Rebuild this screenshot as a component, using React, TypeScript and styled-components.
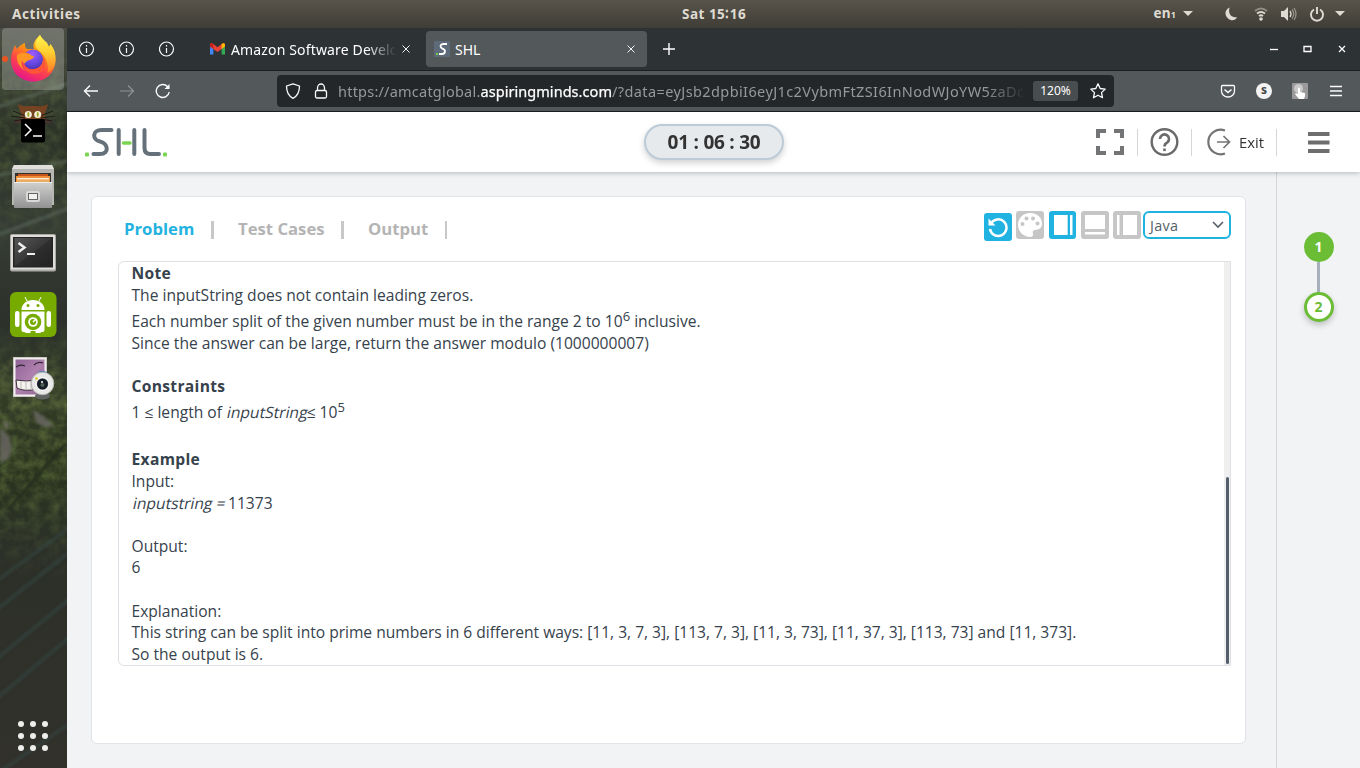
import React from "react";
import styled, { createGlobalStyle } from "styled-components";

const GlobalStyle = createGlobalStyle`
  * { box-sizing: border-box; }
  body { margin: 0; overflow: hidden; font-family: "Open Sans", "Noto Sans", sans-serif; }
  svg { display: block; flex: none; }
`;

const Desktop = styled.div`
  width: 1360px;
  height: 768px;
  display: flex;
  flex-direction: column;
`;

/* ---------- system bar ---------- */
const SystemBar = styled.header`
  height: 28px;
  flex: none;
  display: grid;
  grid-template-columns: 670px auto 1fr;
  align-items: center;
  padding: 0 15px 0 12px;
  background: linear-gradient(#58544a, #3f3d37);
  color: #dfdbd2;
  font: 700 13.5px/27px "Noto Sans", sans-serif;
`;
const SystemLabel = styled.span<{ $spacing?: number }>`
  letter-spacing: ${(p) => p.$spacing ?? 0}px;
  white-space: nowrap;
`;
const Indicators = styled.div`
  display: flex;
  align-items: center;
  justify-content: flex-end;
`;
const Indicator = styled.span<{ $gap: number }>`
  display: flex;
  margin-left: ${(p) => p.$gap}px;
`;
const SmallDigit = styled.span`
  font-size: 9px;
`;

const Workspace = styled.div`
  flex: 1;
  display: flex;
  min-height: 0;
`;

/* ---------- dock ---------- */
const Dock = styled.nav`
  width: 67px;
  flex: none;
  position: relative;
  overflow: hidden;
  background: #33342e;
`;
const Wallpaper = styled.div`
  position: absolute;
  inset: 0;
`;
const DockItems = styled.div`
  position: relative;
  height: 100%;
  display: flex;
  flex-direction: column;
  align-items: center;
  padding: 0 1px 17px 0;
`;
const DockItem = styled.div<{ $active?: boolean }>`
  width: 62px;
  height: 62px;
  margin-bottom: 2px;
  border-radius: 4px;
  display: flex;
  align-items: center;
  justify-content: center;
  background: ${(p) => (p.$active ? "rgba(255,255,255,0.22)" : "none")};
`;
const RunningDot = styled.span`
  position: absolute;
  left: 2px;
  top: 28px;
  width: 6px;
  height: 6px;
  border-radius: 50%;
  background: #e95420;
`;
const AppGrid = styled.div`
  margin-top: auto;
  display: grid;
  grid-template-columns: repeat(3, 6px);
  gap: 6px;
`;
const AppDot = styled.i`
  width: 6px;
  height: 6px;
  border-radius: 50%;
  background: #eeeeec;
`;

/* ---------- browser ---------- */
const Browser = styled.main`
  flex: 1;
  min-width: 0;
  display: flex;
  flex-direction: column;
  font-family: "Noto Sans", sans-serif;
`;
const TabBar = styled.div`
  height: 43px;
  flex: none;
  display: flex;
  align-items: center;
  padding: 0 14px 1px 0;
  background: #2d3235;
  border-bottom: 1px solid #1c1f21;
  color: #fff;
`;
const PinnedTab = styled.div`
  width: 40px;
  flex: none;
  display: flex;
  justify-content: center;
`;
const Tab = styled.div<{ $active?: boolean }>`
  width: 221px;
  flex: none;
  height: 36px;
  margin-left: ${(p) => (p.$active ? 4 : 14)}px;
  padding: 0 12px 0 ${(p) => (p.$active ? 8 : 9)}px;
  display: flex;
  align-items: center;
  gap: ${(p) => (p.$active ? 5 : 6)}px;
  border-radius: 4px;
  background: ${(p) => (p.$active ? "#53585a" : "transparent")};
`;
const TabTitle = styled.span<{ $fade?: boolean; $spacing: number }>`
  flex: 1;
  min-width: 0;
  overflow: hidden;
  white-space: nowrap;
  padding-top: 2px;
  font-size: 14px;
  line-height: 20px;
  letter-spacing: ${(p) => p.$spacing}px;
  ${(p) => (p.$fade ? "mask-image: linear-gradient(90deg, #000 82%, transparent);" : "")}
`;
const NewTab = styled.div`
  margin: 1px 0 0 16px;
`;
const WindowControls = styled.div`
  margin-left: auto;
  display: flex;
  gap: 24px;
`;
const NavBar = styled.div`
  height: 41px;
  flex: none;
  display: flex;
  align-items: center;
  padding: 0 16px 1px 16px;
  background: #53585a;
  border-bottom: 1px solid #1c1f21;
`;
const NavButtons = styled.div`
  display: flex;
  gap: 20px;
  width: 194px;
`;
const UrlBar = styled.div`
  width: 837px;
  height: 32px;
  display: flex;
  align-items: center;
  padding: 0 8px;
  border-radius: 4px;
  background: #232729;
`;
const UrlIcons = styled.div`
  display: flex;
  gap: 12px;
`;
const Url = styled.span`
  width: 688px;
  margin-left: 9px;
  white-space: nowrap;
  color: #96999a;
  font-size: 14.5px;
  line-height: 22px;
  letter-spacing: 0.22px;
  mask-image: linear-gradient(90deg, #000 94%, transparent);
`;
const Domain = styled.span`
  color: #fff;
  letter-spacing: 0.05px;
  -webkit-text-stroke: 0.25px #fff;
`;
const UrlQuery = styled.span`
  letter-spacing: 0.4px;
`;
const ZoomBadge = styled.span`
  width: 45px;
  margin: 0 12px 0 7px;
  height: 20px;
  border-radius: 3px;
  background: #484d4f;
  color: #fff;
  font-size: 12px;
  line-height: 20px;
  text-align: center;
`;
const Extensions = styled.div`
  margin-left: auto;
  display: flex;
  align-items: center;
  gap: 20px;
`;
const ProfileBadge = styled.span`
  width: 16px;
  height: 16px;
  border-radius: 50%;
  background: #f3f3f3;
  color: #444;
  font: 700 12px/14px "Noto Sans", sans-serif;
  text-align: center;
`;

/* ---------- page ---------- */
const Page = styled.div`
  flex: 1;
  min-height: 0;
  display: flex;
  flex-direction: column;
  background: #f1f3f5;
  font-family: "Open Sans", sans-serif;
`;
const PageHeader = styled.header`
  height: 60px;
  flex: none;
  position: relative;
  display: flex;
  align-items: center;
  padding: 0 30px 0 18px;
  background: #fff;
  box-shadow: 0 1px 5px rgba(0, 0, 0, 0.25);
`;
const Timer = styled.div`
  width: 140px;
  height: 36px;
  margin-left: 477px;
  border: 2px solid #bccbd7;
  border-radius: 18px;
  background: #e7eaed;
  box-shadow: 0 3px 6px rgba(0, 0, 0, 0.18);
  color: #333;
  font-size: 19px;
  font-weight: 700;
  line-height: 32px;
  letter-spacing: -0.25px;
  text-align: center;
  white-space: nowrap;
`;
const HeaderTools = styled.div`
  margin-left: auto;
  display: flex;
  align-items: center;
`;
const HeaderCell = styled.div<{ $width: number; $divided?: boolean; $justify?: string }>`
  width: ${(p) => p.$width}px;
  height: 27px;
  display: flex;
  align-items: center;
  justify-content: ${(p) => p.$justify ?? "center"};
  border-right: ${(p) => (p.$divided ? "1px solid #d5d6d9" : "none")};
  color: #333;
  font-size: 14.8px;
`;
const ExitGroup = styled.div`
  display: flex;
  align-items: center;
  gap: 8px;
  padding-right: 12px;
`;
const PageBody = styled.div`
  flex: 1;
  min-height: 0;
  display: flex;
`;
const ContentArea = styled.section`
  width: 1210px;
  padding: 24px 30px 24px 24px;
  border-right: 1px solid #d5d7db;
`;
const Card = styled.article`
  height: 548px;
  padding: 14px 14px 0 26px;
  border: 1px solid #e1e3e8;
  border-radius: 6px;
  background: #fff;
`;
const CardTop = styled.div`
  height: 50px;
  display: flex;
  align-items: flex-start;
`;
const SectionTab = styled.div<{ $active?: boolean; $width: number; $bar: number }>`
  width: ${(p) => p.$width}px;
  height: 18px;
  margin: 10px 18px 0 6px;
  border-right: ${(p) => p.$bar}px solid #c8c8c8;
  color: ${(p) => (p.$active ? "#24b2e0" : "#b4b4b4")};
  font-size: 16.7px;
  font-weight: 700;
  line-height: 15px;
  white-space: nowrap;
`;
const Toolbar = styled.div`
  margin-left: auto;
  display: flex;
  gap: 4px;
`;
const ToolButton = styled.button<{ $on?: boolean; $drop?: number; $width?: number; $shift?: boolean }>`
  width: ${(p) => p.$width ?? 28}px;
  height: 28px;
  margin: ${(p) => p.$drop ?? 0}px 0 0 ${(p) => (p.$shift ? 1 : 0)}px;
  padding: 0;
  border: 0;
  border-radius: 3px;
  display: flex;
  align-items: center;
  justify-content: center;
  background: ${(p) => (p.$on ? "#20b2e0" : "#c6c6c6")};
`;
const LanguageSelect = styled.div`
  width: 88px;
  height: 28px;
  margin-left: -2px;
  padding: 0 5px;
  display: flex;
  align-items: center;
  justify-content: space-between;
  border: 2px solid #20b2e0;
  border-radius: 6px;
  background: #fff;
  color: #555f69;
  font-size: 14.4px;
  letter-spacing: 0.3px;
`;
const Statement = styled.div`
  height: 405px;
  display: flex;
  justify-content: space-between;
  border: 1px solid #dfe0e5;
  border-radius: 6px 0 0 6px;
  overflow: hidden;
`;
const StatementText = styled.div`
  padding-left: 12.5px;
  color: #36424c;
  font-size: 15.6px;
`;
const Line = styled.p<{ $height?: number; $spacing?: number }>`
  margin: 0;
  height: ${(p) => p.$height ?? 22}px;
  display: flex;
  align-items: flex-end;
  line-height: 22px;
  letter-spacing: ${(p) => p.$spacing ?? 0}px;
  white-space: pre;
`;
const Heading = styled(Line)`
  font-weight: 700;
  letter-spacing: 0.32px;
`;
const Slanted = styled.span`
  transform: skewX(-12deg);
  transform-origin: 0 78%;
`;
const Sup = styled.span`
  font-size: 13px;
  line-height: 20px;
  align-self: flex-start;
`;
const ScrollTrack = styled.div`
  width: 6px;
  display: flex;
  flex-direction: column;
  align-items: center;
  justify-content: flex-end;
  padding: 0 0 1px 1px;
  background: #efefef;
`;
const ScrollThumb = styled.div`
  width: 3px;
  height: 187px;
  border-radius: 2px;
  background: #545f6b;
`;
const QuestionRail = styled.aside`
  flex: 1;
  display: flex;
  flex-direction: column;
  align-items: center;
  padding-top: 60px;
`;
const QuestionDot = styled.div<{ $current?: boolean }>`
  width: 30px;
  height: 30px;
  border: 3px solid #6bbd35;
  border-radius: 50%;
  background: ${(p) => (p.$current ? "#fff" : "#6bbd35")};
  color: ${(p) => (p.$current ? "#6bbd35" : "#fff")};
  box-shadow: ${(p) => (p.$current ? "0 3px 6px rgba(0,0,0,0.22)" : "none")};
  font-size: 14px;
  font-weight: 700;
  line-height: 24px;
  text-align: center;
`;
const Connector = styled.div`
  width: 3px;
  height: 30px;
  background: #a8b1bb;
`;

/* ---------- drawings ---------- */
const WallpaperArt = () => (
  <svg width="67" height="740" viewBox="0 28 67 740">
    <defs>
      <linearGradient id="wp" x1="0" y1="0" x2="0" y2="1">
        <stop offset="0" stopColor="#4a4d42" />
        <stop offset=".14" stopColor="#2b3227" />
        <stop offset=".27" stopColor="#363c34" />
        <stop offset=".4" stopColor="#2c312b" />
        <stop offset=".5" stopColor="#333b27" />
        <stop offset=".6" stopColor="#29331e" />
        <stop offset=".7" stopColor="#2c3028" />
        <stop offset="1" stopColor="#32312c" />
      </linearGradient>
      <filter id="leaf" x="0" y="0" width="1" height="1">
        <feTurbulence type="fractalNoise" baseFrequency=".1" numOctaves="4" seed="8" />
        <feColorMatrix values="0 0 0 0 .22  0 0 0 0 .32  0 0 0 0 .08  1.6 0 0 0 -.5" />
      </filter>
      <filter id="soft"><feGaussianBlur stdDeviation="1.5" /></filter>
      <linearGradient id="fade" x1="0" y1="0" x2="0" y2="1">
        <stop offset="0" stopColor="#fff" stopOpacity="0" />
        <stop offset=".25" stopColor="#fff" />
        <stop offset=".6" stopColor="#fff" />
        <stop offset="1" stopColor="#fff" stopOpacity="0" />
      </linearGradient>
      <mask id="leafArea">
        <rect y="28" width="67" height="240" fill="url(#fade)" opacity=".3" />
        <rect y="320" width="67" height="260" fill="url(#fade)" opacity=".5" />
      </mask>
    </defs>
    <rect y="28" width="67" height="740" fill="url(#wp)" />
    <rect y="28" width="67" height="740" filter="url(#leaf)" mask="url(#leafArea)" />
    <g filter="url(#soft)" fill="none" strokeWidth="3">
      <path d="M-5 108L72 82M-5 176L72 160M-5 236L72 207" stroke="#66756a" opacity=".5" />
      <path d="M-5 582L72 526M-5 611L72 550M-5 660L72 597M-5 700L72 635M-5 775L72 722" stroke="#354743" opacity=".7" />
      <path d="M8 510L66 443" stroke="#222b1c" />
      <path d="M0 428l9 8 3 14-4 9-8 4ZM2 421l8 3-3 6ZM33 410l9 5 12 11-10 1-8-5Z" fill="#6b6867" opacity=".8" />
    </g>
  </svg>
);

const FirefoxIcon = () => (
  <svg width="48" height="48" viewBox="0 0 48 48">
    <defs>
      <linearGradient id="ffa" x1=".8" y1=".05" x2=".35" y2="1">
        <stop offset="0" stopColor="#ffd83a" />
        <stop offset=".35" stopColor="#ff980e" />
        <stop offset=".65" stopColor="#ff4748" />
        <stop offset="1" stopColor="#e5158b" />
      </linearGradient>
      <linearGradient id="ffy" x1="0" y1="0" x2="0" y2="1">
        <stop offset="0" stopColor="#fff44f" />
        <stop offset=".45" stopColor="#ffd030" />
        <stop offset="1" stopColor="#ff7a28" />
      </linearGradient>
      <radialGradient id="ffb" cx=".45" cy=".25" r=".8">
        <stop offset="0" stopColor="#a25cff" />
        <stop offset=".6" stopColor="#6547e0" />
        <stop offset="1" stopColor="#4530a8" />
      </radialGradient>
    </defs>
    <path d="M31 0c1 3 4 5 7 8l2 4c1-1 1-2 1-3 4 4 5.500 9 5.500 16 0 12-9 21.500-22 21.500S2 37 2 25C2 18 5 13 6 10l2 4c2-3 5-5 8-6 0 3 0 5 2 6h7c-2-6 2-10 6-14Z" fill="url(#ffa)" />
    <path d="M31 0c1 3 4 5 7 8l2 4c1-1 1-2 1-3 4 4 5.500 9 5.500 15 0 6-3 12-8 14 2-9-2-17-8-22-7-5-4-11 .5-16Z" fill="url(#ffy)" />
    <circle cx="24" cy="24.500" r="10" fill="url(#ffb)" />
    <path d="M8 20c4-3 11-3 14 0 0 1 2 1 3 1 0 4-6 3-9 7-1 2-2-1-3-3-1 5 0 8 4 11-6-3-10-9-9-16Z" fill="#ff9624" />
    <path d="M14 27c2 6 6 8 11 7 7-1 10-7 9-13 5 8 1 18-9 18-6 0-11-5-11-12Z" fill="#ff5539" />
  </svg>
);

const KittyIcon = () => (
  <svg width="48" height="48" viewBox="0 0 48 48">
    <path d="M9 5q5 3 11 2h8q6 1 11-2-1 5-3 9v8H12v-8q-2-4-3-9Z" fill="#754321" />
    <path d="M5 23q6-6 12-1l3 2H6q-2 0-1-1Zm38 0q-6-6-12-1l-3 2h14q2 0 1-1Z" fill="#493230" />
    <path d="M4 12l13 5M2 17l14 2M5 22l11-2M44 12l-13 5M46 17l-14 2M43 22l-11-2" stroke="#1d1b17" />
    <circle cx="19.300" cy="15.500" r="3.500" fill="#f1efd8" /><circle cx="28.700" cy="15.500" r="3.500" fill="#f1efd8" />
    <ellipse cx="19.300" cy="15.500" rx="1" ry="2.400" fill="#a3a224" /><ellipse cx="28.700" cy="15.500" rx="1" ry="2.400" fill="#a3a224" />
    <rect x="12" y="20" width="24" height="23.500" rx="2" fill="#000" />
    <path d="M16 25l6 6-6 6M24 37h9" fill="none" stroke="#fff" strokeWidth="1.500" />
  </svg>
);

const FilesIcon = () => (
  <svg width="48" height="48" viewBox="0 1 48 48">
    <defs><linearGradient id="cab" x1="0" y1="0" x2="0" y2="1"><stop offset="0" stopColor="#d1d1d0" /><stop offset="1" stopColor="#929292" /></linearGradient></defs>
    <path d="M5 3h38l2 4v36H3V7Z" fill="#b6b6b3" />
    <path d="M5 3h38l2 4H3Z" fill="#e0dfdc" />
    <path d="M6 11h36v11H6Z" fill="#34302a" />
    <path d="M9 12h30v10H9Z" fill="#c6541d" /><path d="M7 14h34v8H7Z" fill="#f08f35" /><path d="M8 16h32v1.500H8Z" fill="#f8eedf" /><path d="M8 18h32v3H8Z" fill="#e8ad61" />
    <rect x="5" y="20" width="38" height="26" rx="1" fill="url(#cab)" />
    <path d="M5 20.500h38" stroke="#ecece9" />
    <rect x="18" y="30" width="12" height="9" rx="1.500" fill="none" stroke="#d9d9d7" strokeWidth="2" />
    <rect x="19.500" y="31.500" width="9" height="6" fill="#f1f1ef" stroke="#666" />
  </svg>
);

const TerminalIcon = () => (
  <svg width="48" height="48" viewBox="0 -1.500 48 48">
    <defs><linearGradient id="term" x1="0" y1="0" x2="1" y2="1"><stop offset="0" stopColor="#555" /><stop offset=".5" stopColor="#393939" /><stop offset=".52" stopColor="#2e2e2e" /><stop offset="1" stopColor="#222" /></linearGradient></defs>
    <rect x="1" y="5.500" width="46" height="37.500" rx="2" fill="#aaa9a6" />
    <rect x="2" y="6.500" width="44" height="34.500" rx="1" fill="#deddda" />
    <rect x="4" y="8.500" width="40" height="30.500" fill="#252525" />
    <rect x="5.500" y="9.500" width="37" height="28" fill="url(#term)" />
    <path d="M9.500 14.500l6 4.500-6 4.500" fill="none" stroke="#eee" strokeWidth="2.500" /><path d="M18 25.500h8" stroke="#eee" strokeWidth="2" />
  </svg>
);

const AndroidIcon = () => (
  <svg width="48" height="48" viewBox="0 0 48 48">
    <rect x="1" y="1" width="46.500" height="45" rx="6" fill="#77ab00" />
    <path d="M12.500 19c0-6 5-10 11.500-10s11.500 4 11.500 10Z" fill="#fff" />
    <path d="M18 10l-2-4M30 10l2-4" stroke="#fff" />
    <circle cx="19" cy="14.500" r="1.500" fill="#77ab00" /><circle cx="29" cy="14.500" r="1.500" fill="#77ab00" />
    <path d="M12.500 20.500h23V39q0 2-2 2h-1q0 1-3 1h-3v-2h-5v2h-3q-3 0-3-1h-1q-2 0-2-2Z" fill="#fff" />
    <rect x="6" y="20" width="4.500" height="16" rx="2.200" fill="#fff" /><rect x="37.500" y="20" width="4.500" height="16" rx="2.200" fill="#fff" />
    <circle cx="24" cy="31" r="8.300" fill="#77ab00" /><circle cx="24" cy="31" r="4.800" fill="#fff" /><circle cx="24" cy="31" r="3" fill="#77ab00" />
    <path d="M24 31l3-3" stroke="#fff" strokeWidth="1.500" />
  </svg>
);

const CheeseIcon = () => (
  <svg width="48" height="48" viewBox="0 2 48 48">
    <defs><linearGradient id="chz" x1="0" y1="0" x2="1" y2="1"><stop offset="0" stopColor="#8f6396" /><stop offset=".5" stopColor="#ae80ad" /><stop offset="1" stopColor="#916393" /></linearGradient></defs>
    <rect x="4.500" y="4.500" width="33" height="39" fill="#f1f0ed" stroke="#c9c8c4" />
    <rect x="6.500" y="6.500" width="29" height="35" fill="url(#chz)" />
    <path d="M7 14q4-3 9-1M25 12q4-4 9-2" fill="none" stroke="#302731" strokeWidth="1.200" />
    <path d="M7 27q10 2 21 0v9q-13 3-20-1Z" fill="#f5f2ee" stroke="#3d3040" />
    <path d="M12 28v8M17 28v9M22 28v9" stroke="#bbb" />
    <ellipse cx="33.500" cy="43" rx="7.500" ry="3.500" fill="#606462" />
    <path d="M29 19q4-2 9 0v3h-9Z" fill="#4c83bc" />
    <circle cx="33.500" cy="30.500" r="11.300" fill="#e8e9e6" stroke="#b1b3b0" />
    <circle cx="33.500" cy="31" r="6.500" fill="#b8bec0" stroke="#fff" /><circle cx="33.500" cy="31" r="5.500" fill="#141c24" /><circle cx="33.500" cy="32" r="2" fill="#4f5f54" /><circle cx="33" cy="29" r="1" fill="#fff" />
    <circle cx="27.500" cy="25.500" r="1.500" fill="#ded03c" />
  </svg>
);

const InfoIcon = () => (
  <svg width="16" height="16" viewBox="0 0 16 16" fill="none" stroke="#fbfbfb" strokeWidth="1.200">
    <circle cx="7.500" cy="8" r="7" /><path d="M7.500 7v5M7.500 4v1.500" />
  </svg>
);
const GmailIcon = () => (
  <svg width="15" height="12" viewBox="0 0 15 12">
    <path d="M0 2v9.500h3.400V4.500Z" fill="#4285f4" /><path d="M11.600 4.500v7H15V2Z" fill="#34a853" />
    <path d="M0 1.700C0 .2 1.800-.3 3 .8l4.500 3.500L12 .8c1.200-1 3-.6 3 .9v1.800L7.500 9 0 3.500Z" fill="#ea4335" />
    <path d="M11.600 1.100C13-.2 15 .2 15 2v1.500l-3.400 2.400Z" fill="#fbbc04" /><path d="M0 2C0 .2 2-.2 3.400 1.100v4.800L0 3.500Z" fill="#c5221f" />
  </svg>
);
const ShlFavicon = () => (
  <svg width="16" height="16" viewBox="0 0 16 16">
    <rect width="16" height="16" fill="#5c6a79" />
    <path d="M13 3H9.500C6.500 3 6 5 7 6.500S11 8 11 10s-1.500 3-3 3H5" fill="none" stroke="#fff" strokeWidth="1.800" /><rect x="2" y="12" width="2" height="2" fill="#72cf4b" />
  </svg>
);
const CrossIcon = () => (
  <svg width="8" height="8" viewBox="0 0 8 8" stroke="#f3f3f3" strokeWidth="1"><path d="M.5.5l7 7M7.500.5l-7 7" /></svg>
);
const ShlLogo = () => (
  <svg width="82" height="30" viewBox="0 0 82 30" fill="none" stroke="#65717a" strokeWidth="4" strokeLinecap="round" strokeLinejoin="round">
    <path d="M26.500 3H16.500C7 3 7 13 15 14.500S25 27 15 27H8.500" /><path d="M33.700 3v24M49.300 3v24M59.500 3v18q0 6 6 6H74" />
    <path d="M38.500 16h6.500" stroke="#7ad552" strokeWidth="3.500" />
    <rect x="0" y="25.500" width="4" height="4" rx="1" fill="#7ad552" stroke="none" /><rect x="78" y="25.500" width="4" height="4" rx="1" fill="#7ad552" stroke="none" />
  </svg>
);

export default function App() {
  return (
    <Desktop>
      <GlobalStyle />
      <SystemBar>
        <SystemLabel $spacing={0.6}>Activities</SystemLabel>
        <SystemLabel $spacing={0.5}>Sat 15∶16</SystemLabel>
        <Indicators>
          <SystemLabel $spacing={0.2}>en<SmallDigit>1</SmallDigit></SystemLabel>
          <Indicator $gap={7}><svg width="10" height="6"><path d="M0 0h10L5 5Z" fill="#dfdbd2" /></svg></Indicator>
          <Indicator $gap={32}><svg width="13" height="14" viewBox="0 0 14 14"><path d="M5 0C0 2-1 8 3 11.500S11 14 13 10.500C6 11 3 6 5 0Z" fill="#dfdbd2" /></svg></Indicator>
          <Indicator $gap={16}><svg width="14" height="14" viewBox="0 0 14 14" fill="none" stroke="#dfdbd2" strokeWidth="1.800"><path d="M1 4Q7-1 13 4" opacity=".45" /><path d="M3 6.500q4-3 8 0M5 9q2-1.500 4 0" /><circle cx="7" cy="12" r="1.800" fill="#dfdbd2" stroke="none" /></svg></Indicator>
          <Indicator $gap={13}><svg width="16" height="14" viewBox="0 0 16 14"><path d="M0 4h3l4-4v14l-4-4H0Z" fill="#dfdbd2" /><path d="M9 4q2 3 0 6" fill="none" stroke="#dfdbd2" strokeWidth="1.300" /><path d="M11 2.500q3.500 4.500 0 9M13 1q4 6 0 12" fill="none" stroke="#dfdbd2" strokeWidth="1.300" opacity=".5" /></svg></Indicator>
          <Indicator $gap={13}><svg width="14" height="15" viewBox="0 0 14 15" fill="none" stroke="#dfdbd2" strokeWidth="1.900"><path d="M4 2.500a6 6 0 1 0 6 0M7 0v7" /></svg></Indicator>
          <Indicator $gap={11}><svg width="10" height="6"><path d="M0 0h10L5 5Z" fill="#dfdbd2" /></svg></Indicator>
        </Indicators>
      </SystemBar>

      <Workspace>
        <Dock>
          <Wallpaper><WallpaperArt /></Wallpaper>
          <DockItems>
            <DockItem $active><RunningDot /><FirefoxIcon /></DockItem>
            <DockItem><KittyIcon /></DockItem>
            <DockItem><FilesIcon /></DockItem>
            <DockItem><TerminalIcon /></DockItem>
            <DockItem><AndroidIcon /></DockItem>
            <DockItem><CheeseIcon /></DockItem>
            <AppGrid>{Array.from({ length: 9 }, (_, i) => <AppDot key={i} />)}</AppGrid>
          </DockItems>
        </Dock>

        <Browser>
          <TabBar>
            <PinnedTab><InfoIcon /></PinnedTab>
            <PinnedTab><InfoIcon /></PinnedTab>
            <PinnedTab><InfoIcon /></PinnedTab>
            <Tab><GmailIcon /><TabTitle $fade $spacing={0.15}>Amazon Software Develo</TabTitle><CrossIcon /></Tab>
            <Tab $active><ShlFavicon /><TabTitle $spacing={0}>SHL</TabTitle><CrossIcon /></Tab>
            <NewTab><svg width="12" height="12" stroke="#fff" strokeWidth="1.400"><path d="M6 0v12M0 6h12" /></svg></NewTab>
            <WindowControls>
              <svg width="9" height="8"><path d="M0 4.500h8" stroke="#fff" strokeWidth="1.300" /></svg>
              <svg width="9" height="8"><path d="M1 1.500h7v5H1Z" fill="none" stroke="#fff" strokeWidth="1.300" /></svg>
              <svg width="10" height="8" stroke="#fff" strokeWidth="1.200"><path d="M3 1l6 6M9 1L3 7" /></svg>
            </WindowControls>
          </TabBar>

          <NavBar>
            <NavButtons>
              <svg width="16" height="16" fill="none" stroke="#fbfbfb" strokeWidth="1.400"><path d="M15 8H1.500M7 2.500L1.500 8 7 13.500" /></svg>
              <svg width="16" height="16" fill="none" stroke="#8f9394" strokeWidth="1.200"><path d="M1 8h13.500M9 2.500L14.500 8 9 13.500" /></svg>
              <svg width="16" height="16" fill="none" stroke="#fbfbfb" strokeWidth="1.400"><path d="M14.200 9A6.500 6.500 0 1 1 12.500 3.500L14 5" /><path d="M14.500 1v5h-5Z" fill="#fbfbfb" stroke="none" /></svg>
            </NavButtons>
            <UrlBar>
              <UrlIcons>
                <svg width="16" height="16" fill="none" stroke="#fbfbfb" strokeWidth="1.300"><path d="M8 .8L14.500 3c0 6-2 10-6.500 12.300C3.500 13 1.500 9 1.500 3Z" strokeLinejoin="round" /></svg>
                <svg width="16" height="16" fill="none" stroke="#fbfbfb" strokeWidth="1.300"><rect x="2.500" y="7.500" width="11" height="7.500" rx="1.500" /><path d="M4.500 7.500V5a3.500 4 0 0 1 7 0v2.500" /></svg>
              </UrlIcons>
              <Url>https://amcatglobal.<Domain>aspiringminds.com</Domain><UrlQuery>/?data=eyJsb2dpbiI6eyJ1c2VybmFtZSI6InNodWJoYW5zaDc</UrlQuery></Url>
              <ZoomBadge>120%</ZoomBadge>
              <svg width="16" height="16" fill="none" stroke="#fbfbfb" strokeWidth="1.300" strokeLinejoin="round"><path d="M8 .8l2.200 4.700 5 .6-3.700 3.500 1 5.100L8 12.200l-4.500 2.500 1-5.100L.8 6.100l5-.6Z" /></svg>
            </UrlBar>
            <Extensions>
              <svg width="16" height="16" fill="none" stroke="#fbfbfb" strokeWidth="1.300"><path d="M2.500 2.500h11q1 0 1 1V8a6.500 6 0 0 1-13 0V3.500q0-1 1-1Z" /><path d="M4.500 6.500L8 9.500l3.500-3" strokeWidth="1.600" /></svg>
              <ProfileBadge>s</ProfileBadge>
              <svg width="16" height="16"><rect width="16" height="16" rx="1" fill="#9a9a9a" /><circle cx="6.500" cy="5.500" r="4.500" fill="#c9c9c9" /><path d="M6 5q1-1 2 0v4l5 1v3l-1 3H7l-4-5 1-1 2 1Z" fill="#fff" /></svg>
              <svg width="16" height="16" stroke="#fbfbfb" strokeWidth="1.300"><path d="M2 3.500h12M2 8h12M2 12.500h12" /></svg>
            </Extensions>
          </NavBar>

          <Page>
            <PageHeader>
              <ShlLogo />
              <Timer>01 : 06 : 30</Timer>
              <HeaderTools>
                <HeaderCell $width={42} $divided $justify="flex-start"><svg width="28" height="26" fill="none" stroke="#737475" strokeWidth="4"><path d="M2 9V2h8M18 2h8v7M26 17v7h-8M10 24H2v-7" /></svg></HeaderCell>
                <HeaderCell $width={54} $divided><svg width="29" height="28" viewBox="-.5 0 29 28" fill="none" stroke="#6a6a6a"><circle cx="14" cy="14" r="12.800" strokeWidth="2.400" /><path d="M9.500 11a4.500 4.500 0 1 1 7 3.700Q14 16 14 18.500" strokeWidth="2.600" /><rect x="12.700" y="20.500" width="2.600" height="2.600" fill="#6a6a6a" stroke="none" /></svg></HeaderCell>
                <HeaderCell $width={85} $divided $justify="flex-end"><ExitGroup><svg width="24" height="28" fill="none" stroke="#737475" strokeWidth="2.200"><path d="M18 2.500A12.300 12.300 0 1 0 18 25.500" /><path d="M10 14h12.500M16.500 8l6 6-6 6" strokeWidth="1.700" /></svg>Exit</ExitGroup></HeaderCell>
                <HeaderCell $width={53} $justify="flex-end"><svg width="22" height="21" stroke="#6e6e6e" strokeWidth="4"><path d="M0 2h21.500M0 10.500h21.500M0 19h21.500" /></svg></HeaderCell>
              </HeaderTools>
            </PageHeader>

            <PageBody>
              <ContentArea>
                <Card>
                  <CardTop>
                    <SectionTab $active $width={90} $bar={3}>Problem</SectionTab>
                    <SectionTab $width={106} $bar={3}>Test Cases</SectionTab>
                    <SectionTab $width={79} $bar={2}>Output</SectionTab>
                    <Toolbar>
                      <ToolButton $on $drop={2}><svg width="22" height="22" fill="none" stroke="#fff" strokeWidth="2.500"><path d="M4 7.500A8.300 8.300 0 1 1 3 13" /><path d="M1.500 2.500v7h7Z" fill="#fff" stroke="none" /></svg></ToolButton>
                      <ToolButton><svg width="26" height="26" viewBox="0 0 26 26"><path d="M13 1C6 1 1 6 1 13s6 12 12 12c5 0 2-4 3-6s9 0 9-7S20 1 13 1Z" fill="#fff" /><g fill="#c6c6c6"><circle cx="5.500" cy="12" r="2" /><circle cx="9.500" cy="6.500" r="2" /><circle cx="16" cy="6.500" r="2" /><circle cx="20.500" cy="11.500" r="2" /></g></svg></ToolButton>
                      <ToolButton $on $width={27} $shift><svg width="20" height="20"><path fill="#fff" d="M1 0h13v20H1z" /><path fill="#b8e5f5" d="M14 0h1v20h-1z" /><path fill="#fff" d="M17 0h2.500v20H17z" /></svg></ToolButton>
                      <ToolButton $shift><svg width="20" height="20"><path fill="#fff" d="M0 0h20v14H0zM0 17h20v2.500H0z" /></svg></ToolButton>
                      <ToolButton><svg width="20" height="20"><path fill="#fff" d="M0 0h2.500v20H0zM6 0h14v20H6z" /></svg></ToolButton>
                      <LanguageSelect>Java<svg width="12" height="8" fill="none" stroke="#555f69" strokeWidth="1.600"><path d="M1 1l5 5 5-5" /></svg></LanguageSelect>
                    </Toolbar>
                  </CardTop>
                  <Statement>
                    <StatementText>
                      <Heading>Note</Heading>
                      <Line>The inputString does not contain leading zeros.</Line>
                      <Line $height={26}>Each number split of the given number must be in the range 2 to 10<Sup>6</Sup> inclusive.</Line>
                      <Line>Since the answer can be large, return the answer modulo (1000000007)</Line>
                      <Heading $height={43}>Constraints</Heading>
                      <Line $height={26}>1 ≤ length of <Slanted>inputString</Slanted>≤ 10<Sup>5</Sup></Line>
                      <Heading $height={47}>Example</Heading>
                      <Line>Input:</Line>
                      <Line><Slanted>inputstring = </Slanted>11373</Line>
                      <Line $height={43}>Output:</Line>
                      <Line $height={21}>6</Line>
                      <Line $height={44}>Explanation:</Line>
                      <Line $height={21} $spacing={-0.012}>This string can be split into prime numbers in 6 different ways: [11, 3, 7, 3], [113, 7, 3], [11, 3, 73], [11, 37, 3], [113, 73] and [11, 373].</Line>
                      <Line>So the output is 6.</Line>
                    </StatementText>
                    <ScrollTrack><ScrollThumb /></ScrollTrack>
                  </Statement>
                </Card>
              </ContentArea>
              <QuestionRail>
                <QuestionDot>1</QuestionDot>
                <Connector />
                <QuestionDot $current>2</QuestionDot>
              </QuestionRail>
            </PageBody>
          </Page>
        </Browser>
      </Workspace>
    </Desktop>
  );
}
